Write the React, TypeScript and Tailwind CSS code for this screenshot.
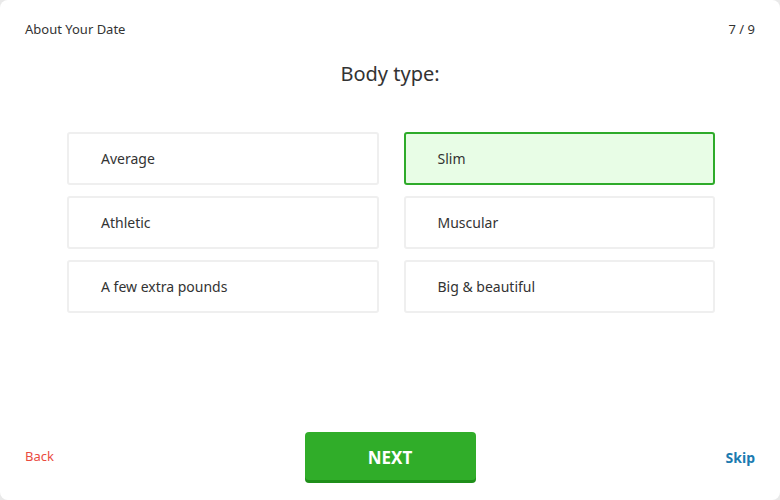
const options = [
  { label: "Average", selected: false },
  { label: "Slim", selected: true },
  { label: "Athletic", selected: false },
  { label: "Muscular", selected: false },
  { label: "A few extra pounds", selected: false },
  { label: "Big & beautiful", selected: false },
];

const App = () => {
  return (
    <div className="w-[780px] h-[500px] bg-[#e9e9e9] font-['Noto_Sans',sans-serif]">
      <div className="w-full h-full bg-white rounded-[8px] flex flex-col">
        <div className="flex items-center justify-between px-[25px] pt-[19px] h-[40px] text-[13px] text-[#333]">
          <span>About Your Date</span>
          <span>7 / 9</span>
        </div>

        <h1 className="text-center text-[20px] text-[#333] mt-[20px] leading-[28px]">
          Body type:
        </h1>

        <div className="grid grid-cols-2 gap-x-[25px] gap-y-[11px] pl-[67px] pr-[65px] mt-[44px]">
          {options.map((opt) => (
            <button
              key={opt.label}
              className={`h-[53px] rounded-[3px] border-2 text-left pl-[32px] text-[14px] text-[#333] ${
                opt.selected
                  ? "border-[#2eab2a] bg-[#e8fde6]"
                  : "border-[#efefef] bg-white"
              }`}
            >
              {opt.label}
            </button>
          ))}
        </div>

        <div className="mt-auto flex items-center justify-between px-[25px] pb-[20px]">
          <button className="text-[13px] text-[#ea4b3f] w-[80px] text-left -mt-[2px]">Back</button>
          <button className="w-[171px] h-[48px] rounded-[4px] bg-[#30ad29] shadow-[0_3px_0_#1f8f1a] -mt-[3px] pt-[3px] text-white font-bold text-[17px]">
            NEXT
          </button>
          <button className="text-[14px] font-bold text-[#1b7bb1] w-[80px] text-right">Skip</button>
        </div>
      </div>
    </div>
  );
};

export default App;
